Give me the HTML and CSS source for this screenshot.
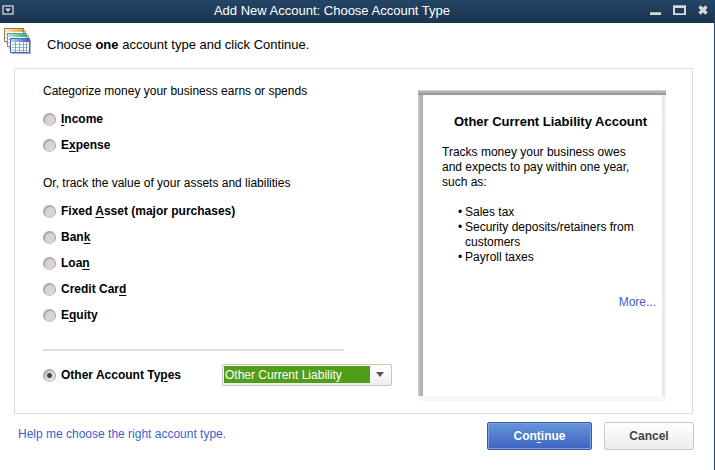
FILE: index.html
```
<!DOCTYPE html>
<html lang="en">
<head>
  <meta charset="UTF-8">
  <meta name="viewport" content="width=device-width, initial-scale=1.0">
  <title>Add New Account: Choose Account Type</title>
  <link rel="stylesheet" href="styles.css">
</head>
<body>

  <!-- Title bar -->
  <header class="titlebar">
    <button type="button" class="titleBtn" aria-label="Window menu">
      <svg width="12" height="10" viewBox="0 0 12 10">
        <rect x="1" y="1" width="10" height="8" fill="#1d3550" stroke="#c9ccd0" stroke-width="1.4"/>
        <path d="M3 3.5h6L6 7z" fill="#d5d8dc"/>
      </svg>
    </button>
    <h1>Add New Account: Choose Account Type</h1>
    <div class="windowControls">
      <button type="button" class="titleBtn" aria-label="Minimize">
        <svg width="11" height="10" viewBox="0 0 11 10">
          <path d="M0 7h11v3H0z" fill="#d8d8d8"/>
          <path d="M0 7h11v1H0z" fill="#a9adb2"/>
        </svg>
      </button>
      <button type="button" class="titleBtn" aria-label="Maximize">
        <svg width="13" height="10" viewBox="0 0 13 10">
          <path fill-rule="evenodd" d="M0 0h13v10H0zM2 3v5h9V3z" fill="#d8d8d8"/>
          <path d="M0 0h13v1H0zM2 8h9v1H2z" fill="#a9adb2"/>
        </svg>
      </button>
      <button type="button" class="titleBtn" aria-label="Close">
        <svg width="10" height="10" viewBox="0 0 10 10">
          <path d="M1.5 1.5l7 7M8.5 1.5l-7 7" stroke="#d8d8d8" stroke-width="3.2"/>
        </svg>
      </button>
    </div>
  </header>

  <!-- Intro line -->
  <div class="intro">
    <svg width="27" height="26" viewBox="0 0 27 26">
      <defs>
        <linearGradient id="gold"><stop offset="0" stop-color="#fbe9bd"/><stop offset="1" stop-color="#eba63a"/></linearGradient>
        <linearGradient id="green"><stop offset="0" stop-color="#b9ecd2"/><stop offset="1" stop-color="#1fb581"/></linearGradient>
        <linearGradient id="blue"><stop offset="0" stop-color="#b9cdf3"/><stop offset="1" stop-color="#3b62bf"/></linearGradient>
      </defs>
      <path d="M2 2h20v14H2z" fill="#b9b9b9"/>
      <rect x=".5" y=".5" width="19" height="13" fill="#fff" stroke="#9b7a52"/>
      <path d="M1 1h18v3H1z" fill="url(#gold)"/>
      <path d="M1 6.500h4M1 9.500h4" stroke="#cdd8dc"/>
      <path d="M5 7h20v14H5z" fill="#b5b9b7"/>
      <rect x="3.500" y="5.500" width="19" height="13" fill="#fff" stroke="#6fa18c"/>
      <path d="M4 6h18v3H4z" fill="url(#green)"/>
      <path d="M4 11.500h3M4 14.500h3" stroke="#b5cfd2"/>
      <path d="M8 12h19v14H8z" fill="#a9adb8"/>
      <rect x="6.500" y="10.500" width="19" height="14" fill="#fff" stroke="#4a66b3"/>
      <path d="M7 11h18v3H7z" fill="url(#blue)"/>
      <path d="M8 16.500h16M8 19.500h16M8 22.500h16" stroke="#8fc0d6"/>
      <path d="M11.500 14v10M15.500 14v10M19.500 14v10M22.500 14v10" stroke="#7fa6d0"/>
    </svg>
    <p>Choose <b>one</b> account type and click Continue.</p>
  </div>

  <form>
    <main class="panel">

      <!-- Account type choices -->
      <div class="choices">
        <fieldset>
          <legend>Categorize money your business earns or spends</legend>
          <label class="choice"><input type="radio" name="type"><span><u>I</u>ncome</span></label>
          <label class="choice"><input type="radio" name="type"><span>E<u>x</u>pense</span></label>
        </fieldset>

        <fieldset>
          <legend>Or, track the value of your assets and liabilities</legend>
          <label class="choice"><input type="radio" name="type"><span>Fixed <u>A</u>sset (major purchases)</span></label>
          <label class="choice"><input type="radio" name="type"><span>Ban<u>k</u></span></label>
          <label class="choice"><input type="radio" name="type"><span>Loa<u>n</u></span></label>
          <label class="choice"><input type="radio" name="type"><span>Credit Car<u>d</u></span></label>
          <label class="choice"><input type="radio" name="type"><span>E<u>q</u>uity</span></label>
        </fieldset>

        <hr>

        <div class="otherRow">
          <label class="choice"><input type="radio" name="type" checked><span>Other Account Ty<u>p</u>es</span></label>
          <div class="selectBox">
            <select aria-label="Other account type">
              <option>Other Current Liability</option>
            </select>
            <svg class="arrow" width="8" height="5" viewBox="0 0 8 5"><path d="M0 0h8L4 5z" fill="#555"/></svg>
          </div>
        </div>
      </div>

      <!-- Description of the selected type -->
      <aside class="info">
        <h2>Other Current Liability Account</h2>
        <p>Tracks money your business owes and expects to pay within one year, such as:</p>
        <ul>
          <li>Sales tax</li>
          <li>Security deposits/retainers from customers</li>
          <li>Payroll taxes</li>
        </ul>
        <a href="#" class="more">More...</a>
      </aside>
    </main>

    <footer>
      <a href="#">Help me choose the right account type.</a>
      <div class="buttons">
        <button type="button" class="btn primary">Con<u>t</u>inue</button>
        <button type="button" class="btn">Cancel</button>
      </div>
    </footer>
  </form>

</body>
</html>
```
FILE: styles.css
```
* {
  box-sizing: border-box;
}

body {
  font-family: "Liberation Sans", Arial, sans-serif;
  font-size: 12px;
  line-height: 15px;
  margin: 0;
  min-height: 100vh;
  background: #fff;
  color: #000;
  border-right: 1px solid #1f3d5c;
}

h1, h2, p, ul, fieldset, legend {
  margin: 0;
  padding: 0;
}

a {
  color: #3a5fcd;
  text-decoration: none;
}

u {
  text-underline-offset: 2px;
}

/* Title bar */
.titlebar {
  display: flex;
  align-items: center;
  height: 23px;
  padding: 0 7px 3px 2px;
  margin-right: -1px;
  background: linear-gradient(#244566, #1a334d);
}

.titlebar h1 {
  flex: 1;
  font-size: 13px;
  font-weight: normal;
  text-align: center;
  color: #fff;
}

.titleBtn {
  display: block;
  padding: 0;
  border: none;
  background: none;
}

.titleBtn svg {
  display: block;
}

.windowControls {
  display: flex;
  gap: 12px;
}

/* Intro line */
.intro {
  display: flex;
  align-items: center;
  gap: 16px;
  padding: 5px 4px 14px;
}

.intro p {
  font-size: 13px;
  padding-top: 6px;
}

/* Main panel */
.panel {
  display: flex;
  margin: 0 21px 0 14px;
  border: 1px solid #ddd;
}

.choices {
  flex: 1;
  padding: 14px 74px 25px 28px;
}

fieldset {
  border: none;
  min-width: 0;
  margin-bottom: 17px;
}

legend {
  line-height: 16px;
  margin-bottom: 7px;
}

.choice {
  display: flex;
  align-items: center;
  gap: 5px;
  height: 26px;
  font-weight: bold;
}

.choice input {
  appearance: none;
  width: 13px;
  height: 13px;
  margin: 0;
  border: 1px solid #a5a5a5;
  border-bottom-color: #c8c8c8;
  border-radius: 50%;
  background: #d6d6d6;
  box-shadow: inset 1px 1px 1px #aaa;
}

.choice input:checked {
  background: radial-gradient(circle, #444 2px, #dcdcdc 3px);
}

hr {
  height: 2px;
  margin: 21px 0 11px;
  border: none;
  background: #ddd;
}

.otherRow {
  display: flex;
  align-items: center;
  justify-content: space-between;
  margin-right: -48px;
}

.selectBox {
  position: relative;
  width: 170px;
}

select {
  appearance: none;
  display: block;
  width: 100%;
  height: 22px;
  padding: 0 24px 0 2px;
  border: 1px solid #c6c6c6;
  border-radius: 2px;
  font: inherit;
  color: #fff;
  background:
    linear-gradient(#4f9e18, #4f9e18) 1px 1px / calc(100% - 22px) calc(100% - 3px) no-repeat,
    linear-gradient(#fff, #eee);
}

option {
  color: #000;
}

.arrow {
  position: absolute;
  top: 8px;
  right: 8px;
  pointer-events: none;
}

/* Description box, shaded like a sunken frame */
.info {
  width: 248px;
  margin: 21px 26px 12px 0;
  padding: 24px 10px 24px 24px;
  background:
    linear-gradient(#f7f7f7, #f7f7f7) bottom / 100% 5px no-repeat,
    linear-gradient(#d8d8d8, #b0b0b0 2px, #949494) top / 100% 5px no-repeat,
    linear-gradient(to right, #d0d0d0, #b8b8b8 2px, #a8a8a8) left / 5px 100% no-repeat,
    linear-gradient(to right, #e4e4e4, #f2f2f2) right / 4px 100% no-repeat;
}

.info h2 {
  font-size: 13px;
  line-height: 16px;
  padding: 0 5px 0 8px;
  margin-bottom: 15px;
  text-align: center;
  white-space: nowrap;
}

.info p {
  padding-right: 12px;
}

.info ul {
  list-style: none;
  margin: 15px 0 30px;
  padding-left: 23px;
}

.info li::before {
  content: "•";
  float: left;
  margin-left: -7px;
}

.more {
  display: block;
  text-align: right;
}

/* Footer */
footer {
  display: flex;
  justify-content: space-between;
  padding: 8px 20px 20px 18px;
}

footer > a {
  padding-top: 5px;
}

.buttons {
  display: flex;
  gap: 12px;
}

.btn {
  width: 90px;
  height: 28px;
  padding: 0;
  font: inherit;
  font-weight: bold;
  color: #444;
  border: 1px solid #c8c8c8;
  border-radius: 2px;
  background: linear-gradient(#fff, #ececec);
}

.btn.primary {
  width: 105px;
  color: #fff;
  border-color: #3a5a9c;
  background: linear-gradient(#6595da, #3c63c0);
  box-shadow: inset 0 0 0 1px #7aa3e0;
}
```
